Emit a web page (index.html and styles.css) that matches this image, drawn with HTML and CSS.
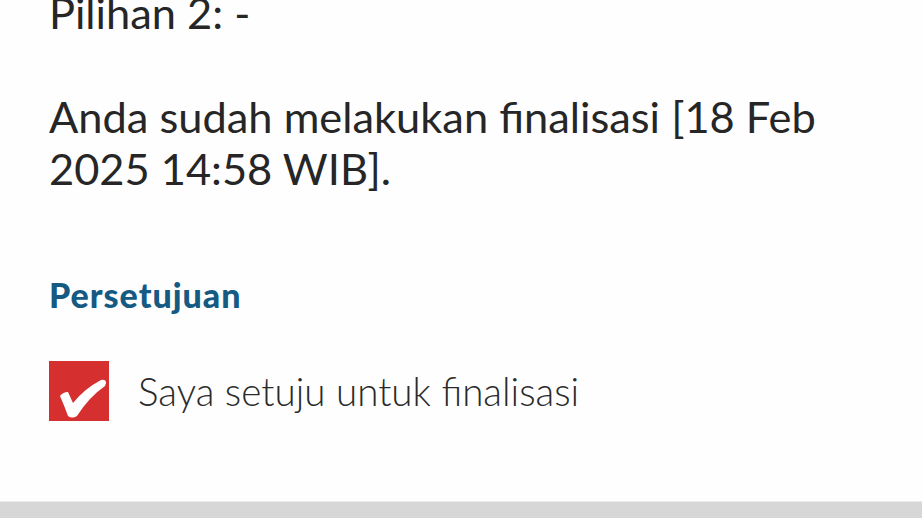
FILE: index.html
```html
<!DOCTYPE html>
<html lang="id">
<head>
<meta charset="utf-8">
<link rel="stylesheet" href="styles.css">
</head>
<body>
<div class="page">
  <main class="content">
    <p class="line">Pilihan 2: -</p>
    <p class="line gap">Anda sudah melakukan finalisasi [18 Feb 2025 14:58 WIB].</p>
    <h2 class="section-title">Persetujuan</h2>
    <label class="agree">
      <span class="checkbox">
        <svg viewBox="0 0 60 60" width="60" height="60" aria-hidden="true">
          <path d="M11 35 Q14 31 19 31 L24 42 Q35 28 52 19 Q57 18 57 22 L56 25 Q40 36 28 55 Q23 58 19 55 Q15 44 11 35 Z" fill="#fff"/>
        </svg>
      </span>
      <span class="agree-text">Saya setuju untuk finalisasi</span>
    </label>
  </main>
  <footer class="bottom-bar"></footer>
</div>
</body>
</html>
```

FILE: styles.css
```css
html, body {
  margin: 0;
  padding: 0;
  background: #fefefe;
}
body {
  font-family: "Lato", "Liberation Sans", sans-serif;
  color: #262626;
  overflow: hidden;
}
.page {
  height: 518px;
  display: flex;
  flex-direction: column;
}
.content {
  flex: 1;
  padding-left: 49px;
  margin-top: -14px;
}
.line {
  margin: 0;
  font-size: 43.4px;
  line-height: 52px;
  width: 800px;
}
.gap {
  margin-top: 52px;
}
.section-title {
  margin: 81px 0 0;
  font-size: 34px;
  line-height: 40px;
  font-weight: 900;
  letter-spacing: 1px;
  color: #145a83;
}
.agree {
  margin-top: 46px;
  display: flex;
  align-items: center;
  gap: 29px;
}
.checkbox {
  width: 60px;
  height: 60px;
  background: #d5302f;
  display: block;
}
.checkbox svg {
  display: block;
}
.agree-text {
  font-size: 38.6px;
  font-weight: 300;
  color: #2a2a2a;
}
.bottom-bar {
  height: 16px;
  background: #d7d7d7;
  border-top: 1px solid #ececec;
}
```
